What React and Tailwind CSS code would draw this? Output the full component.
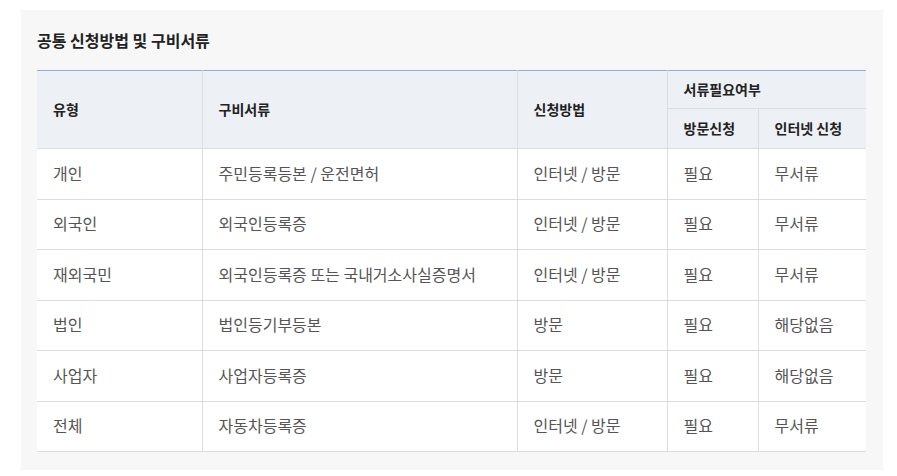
const rows = [
  { type: '개인', docs: '주민등록등본 / 운전면허', method: '인터넷 / 방문', visit: '필요', online: '무서류' },
  { type: '외국인', docs: '외국인등록증', method: '인터넷 / 방문', visit: '필요', online: '무서류' },
  { type: '재외국민', docs: '외국인등록증 또는 국내거소사실증명서', method: '인터넷 / 방문', visit: '필요', online: '무서류' },
  { type: '법인', docs: '법인등기부등본', method: '방문', visit: '필요', online: '해당없음' },
  { type: '사업자', docs: '사업자등록증', method: '방문', visit: '필요', online: '해당없음' },
  { type: '전체', docs: '자동차등록증', method: '인터넷 / 방문', visit: '필요', online: '무서류' },
];

const th = 'border-[#dadde2] px-4 text-left align-middle text-[14px] font-bold text-[#222]';
const td = 'h-[50.5px] border-[#dddddd] px-4 pb-[2px] text-left align-middle text-[16px] text-[#555]';

export default function App() {
  return (
    <div
      className="min-h-screen bg-white pl-[21px] pt-[10px]"
      style={{ fontFamily: '"Noto Sans CJK KR", "Noto Sans", sans-serif' }}
    >
      <section className="w-[862px] bg-[#f7f7f7] pb-[18px] pl-4 pr-[17px] pt-[18px]">
        <h2 className="mb-[18px] h-6 text-[16px] font-bold leading-6 text-[#222]">
          공통 신청방법 및 구비서류
        </h2>
        <table className="w-[829px] table-fixed border-collapse bg-white">
          <colgroup>
            <col className="w-[165px]" />
            <col className="w-[315px]" />
            <col className="w-[150px]" />
            <col className="w-[91px]" />
            <col className="w-[108px]" />
          </colgroup>
          <thead className="bg-[#edf0f5]">
            <tr className="h-[38px] border-t border-t-[#94acce]">
              <th rowSpan={2} className={`${th} border-r border-b`}>유형</th>
              <th rowSpan={2} className={`${th} border-r border-b`}>구비서류</th>
              <th rowSpan={2} className={`${th} border-r border-b`}>신청방법</th>
              <th colSpan={2} className={`${th} border-b`}>서류필요여부</th>
            </tr>
            <tr className="h-[40px]">
              <th className={`${th} border-r border-b`}>방문신청</th>
              <th className={`${th} border-b`}>인터넷 신청</th>
            </tr>
          </thead>
          <tbody>
            {rows.map((r) => (
              <tr key={r.type} className="border-b border-[#dddddd]">
                <td className={`${td} border-r`}>{r.type}</td>
                <td className={`${td} border-r`}>{r.docs}</td>
                <td className={`${td} border-r`}>{r.method}</td>
                <td className={`${td} border-r`}>{r.visit}</td>
                <td className={td}>{r.online}</td>
              </tr>
            ))}
          </tbody>
        </table>
      </section>
    </div>
  );
}
